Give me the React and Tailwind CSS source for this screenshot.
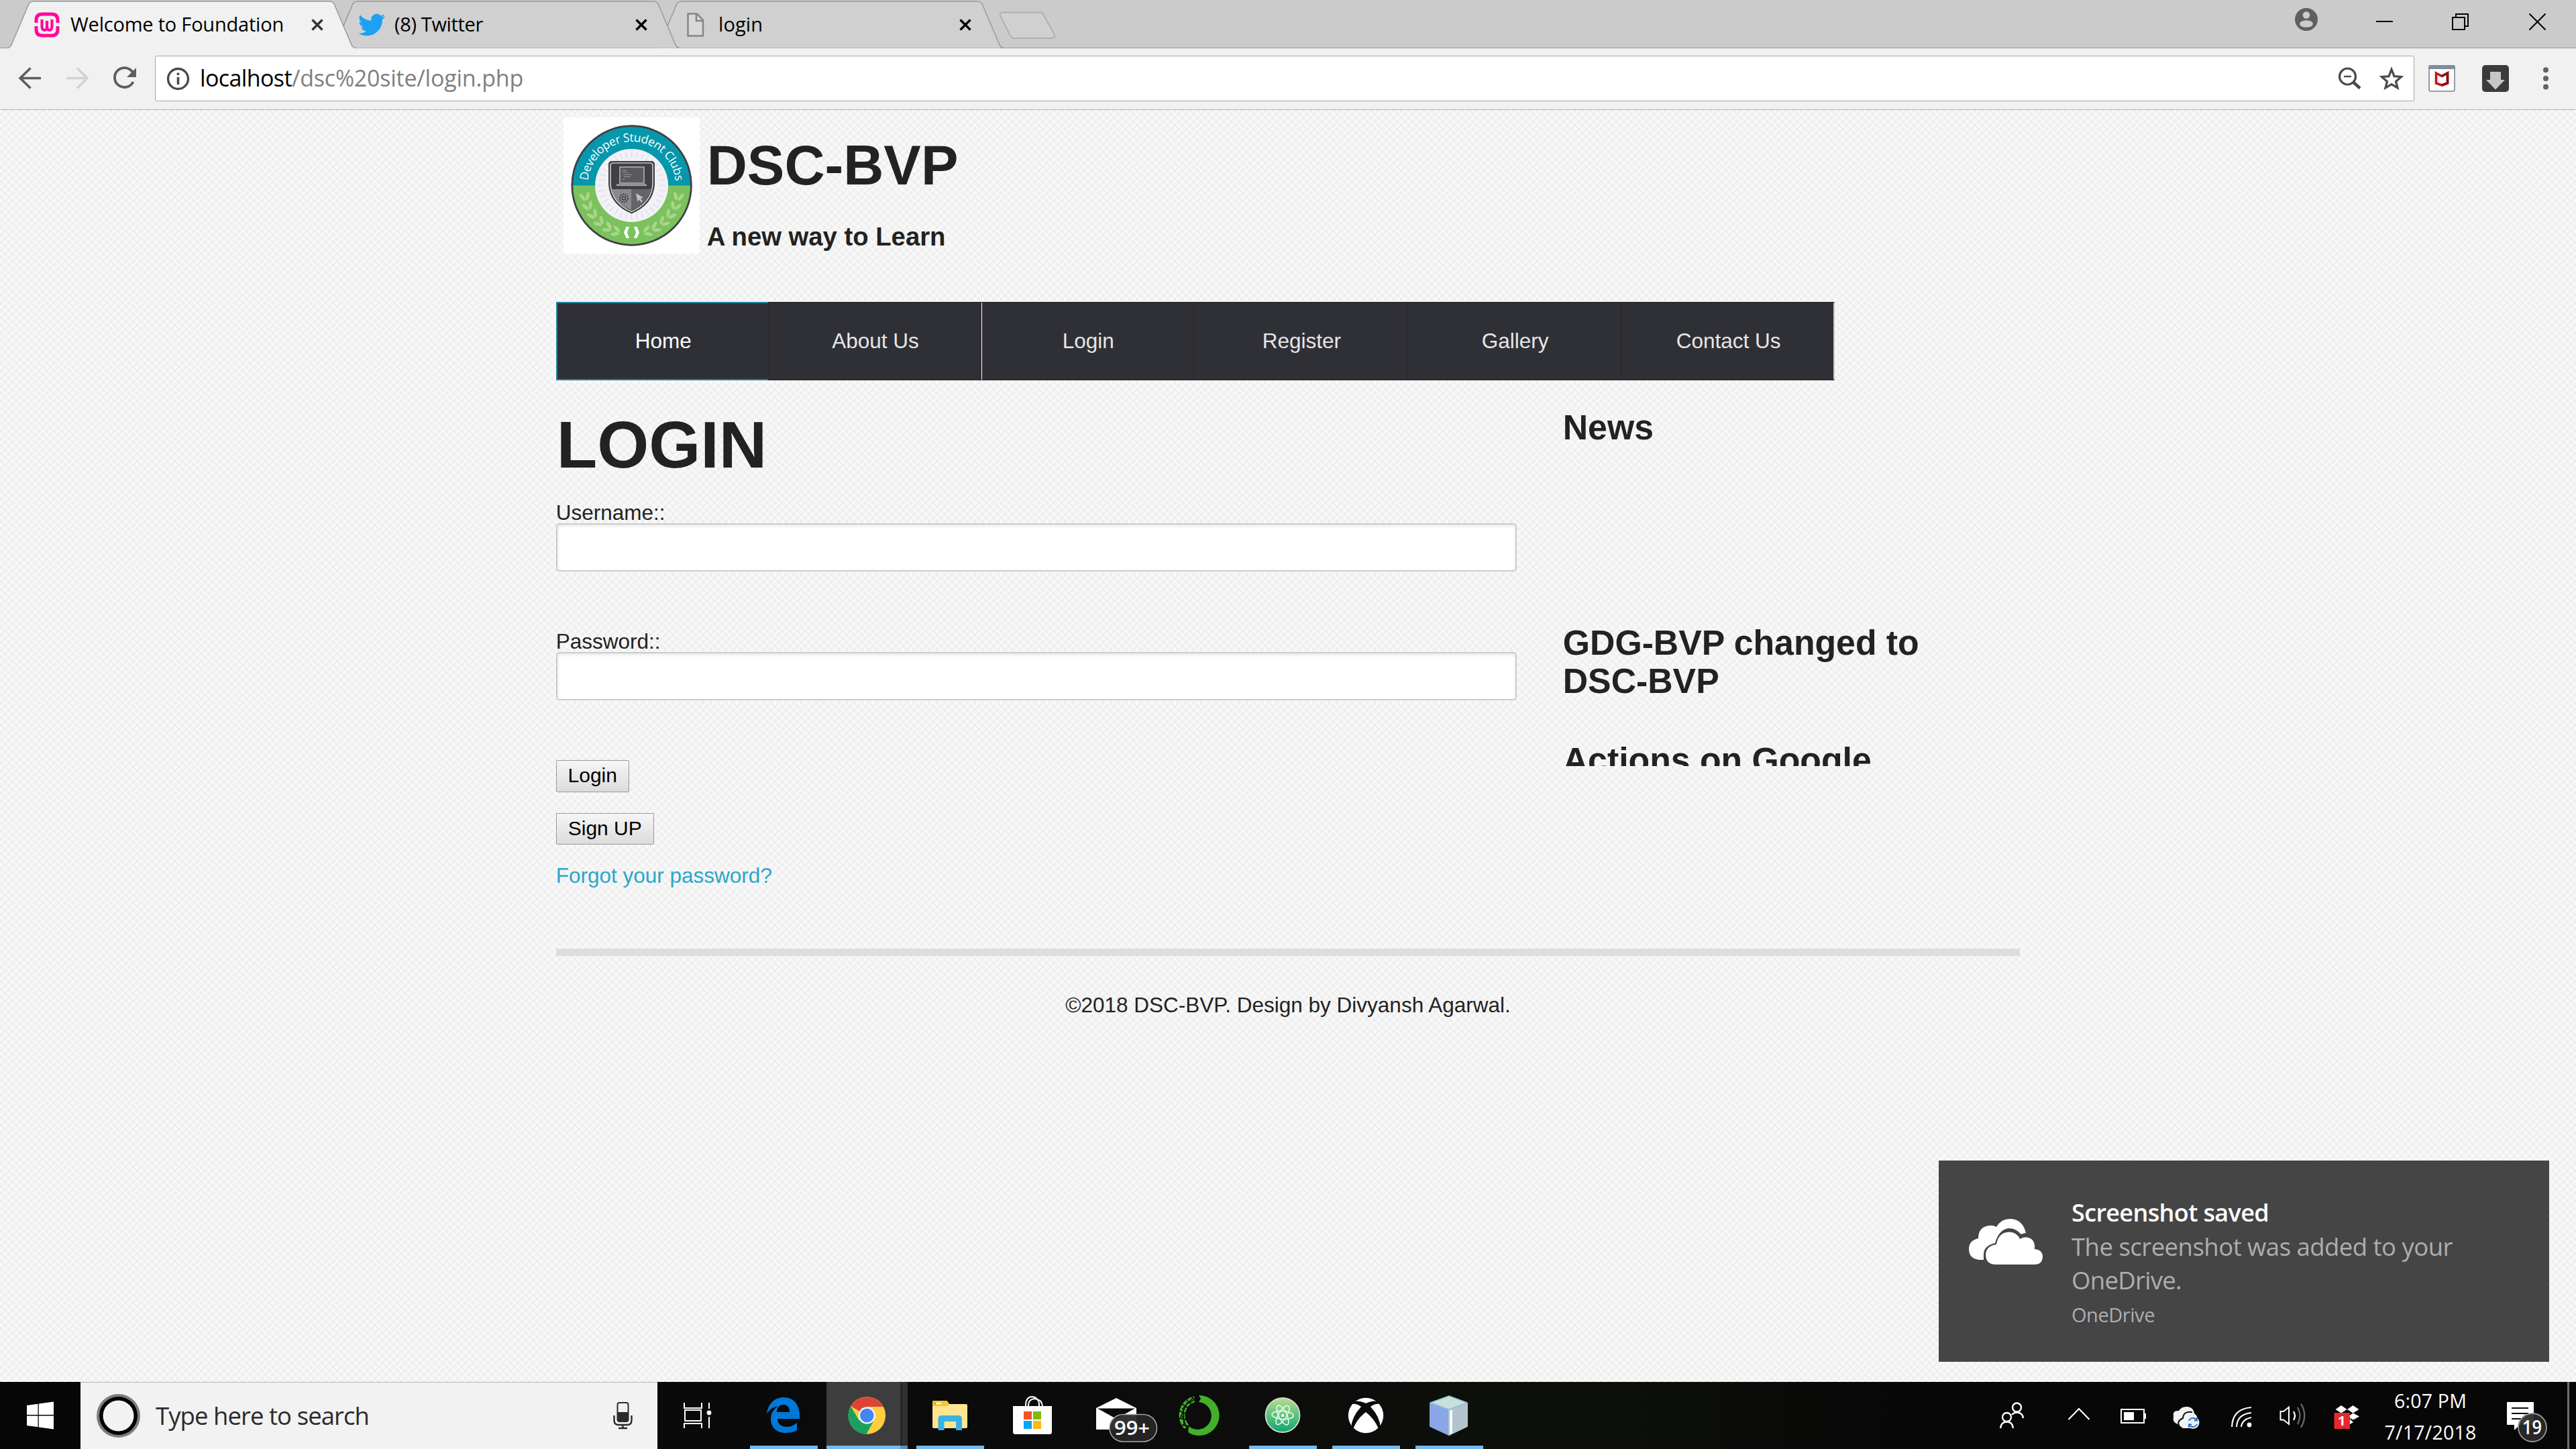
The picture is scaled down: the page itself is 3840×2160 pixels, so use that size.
import React, { useLayoutEffect, useRef } from "react";

const UI = "font-['Open_Sans','Noto_Sans',sans-serif]";
const ARIAL = "font-['Liberation_Sans',Arial,sans-serif]";

/* One line of text whose letter spacing is tuned so that it spans `w` pixels. */
function FitText({ w, className = "", children }) {
  const ref = useRef(null);
  useLayoutEffect(() => {
    const el = ref.current;
    el.style.letterSpacing = "0px";
    const natural = el.getBoundingClientRect().width;
    el.style.letterSpacing = `${(w - natural) / children.length}px`;
  }, [w, children]);
  return (
    <span ref={ref} className={`inline-block whitespace-nowrap ${className}`}>
      {children}
    </span>
  );
}

/* Icon cell drawn in window coordinates. */
function Cell({ x, y, w, h, children, className = "" }) {
  return (
    <svg width={w} height={h} viewBox={`${x} ${y} ${w} ${h}`} fill="none" className={`block shrink-0 ${className}`}>
      {children}
    </svg>
  );
}

/* ---------- browser chrome ---------- */

function WampIcon() {
  return (
    <svg width="38" height="38" viewBox="0 0 38 38" fill="none" stroke="#ff0a9c" strokeWidth="5">
      <path d="M3 16V12Q3 3 12 3H26Q35 3 35 12V16" />
      <path d="M3 21V26Q3 35 12 35H26Q35 35 35 26V21" />
      <path d="M11.500 11V20Q11.500 27 15 27Q19 27 19 21V13V21Q19 27 23 27Q26.500 27 26.500 20V11" strokeWidth="4.200" />
    </svg>
  );
}

function TwitterIcon() {
  return (
    <svg width="40" height="40" viewBox="0 0 24 24" fill="#1da1f2">
      <path d="M23.953 4.570a10 10 0 01-2.825.775 4.958 4.958 0 002.163-2.723c-.951.555-2.005.959-3.127 1.184a4.920 4.920 0 00-8.384 4.482C7.690 8.095 4.067 6.130 1.640 3.162a4.822 4.822 0 00-.666 2.475c0 1.710.870 3.213 2.188 4.096a4.904 4.904 0 01-2.228-.616v.060a4.923 4.923 0 003.946 4.827 4.996 4.996 0 01-2.212.085 4.936 4.936 0 004.604 3.417 9.867 9.867 0 01-6.102 2.105c-.390 0-.779-.023-1.170-.067a13.995 13.995 0 007.557 2.209c9.053 0 13.998-7.496 13.998-13.985 0-.210 0-.420-.015-.630A9.935 9.935 0 0024 4.590z" />
    </svg>
  );
}

function PageIcon() {
  return (
    <svg width="38" height="38" viewBox="0 0 38 38" fill="none" stroke="#858585" strokeWidth="2.500" className="ml-[6px]">
      <path d="M2.500 2.500H16L25 12V35.500H2.500Z" fill="#d9d9d9" />
      <path d="M15 3V13H25" />
    </svg>
  );
}

function Tab({ title, width, icon, active, className }) {
  return (
    <div className={`relative h-[72px] w-[519px] shrink-0 ${className}`}>
      <svg width="519" height="72" viewBox="0 0 519 72" className="absolute inset-0">
        <path
          d="M0 71.500Q5 71 7 64.500L31 8Q33 2 39 2H480Q486 2 488 8L512 64.500Q514 71 519 71.500"
          fill={active ? "#f1f1f1" : "#d0d0d0"}
          stroke="#999"
          strokeWidth="1.500"
        />
        {active && <rect x="3" y="70.500" width="513" height="2" fill="#f1f1f1" />}
      </svg>
      <div className="relative flex h-[72px] items-center pl-[40px] pr-[48px]">
        <div className="flex w-[54px] items-center pt-0.5">{icon}</div>
        <FitText w={width} className={`${UI} text-[29px] leading-[72px] text-black`}>{title}</FitText>
        <svg width="18" height="18" viewBox="0 0 18 18" className="ml-auto mt-0.5" stroke={active ? "#333" : "#000"} strokeWidth="3.400">
          <path d="M1.500 1.500L16.500 16.500M16.500 1.500L1.500 16.500" />
        </svg>
      </div>
    </div>
  );
}

function TabStrip() {
  return (
    <div className="flex h-[72px] bg-[#cbcbcb] bg-[linear-gradient(#999,#999)] bg-[length:100%_1px] bg-bottom bg-no-repeat pl-[11px]">
      <Tab active title="Welcome to Foundation" width={318} icon={<WampIcon />} className="z-30" />
      <Tab title="(8) Twitter" width={132} icon={<TwitterIcon />} className="z-20 -ml-[36px]" />
      <Tab title="login" width={66} icon={<PageIcon />} className="z-10 -ml-[36px]" />
      <Cell x={1480} y={0} w={100} h={70} className="-ml-[15px]">
        <path d="M1494 18.500H1549Q1553 18.500 1554.500 22L1571 52Q1572 57 1567 57H1511Q1507 57 1505 53L1490 23Q1489 18.500 1494 18.500Z" fill="#d0d0d0" stroke="#a6a6a6" strokeWidth="1.500" />
      </Cell>
      <div className="ml-auto flex">
        <Cell x={3400} y={0} w={100} h={70}>
          <circle cx="3438" cy="29" r="17" fill="#5f5f5f" />
          <circle cx="3438" cy="22.500" r="5.200" fill="#cbcbcb" />
          <ellipse cx="3438" cy="35.500" rx="10" ry="5.300" fill="#cbcbcb" />
        </Cell>
        <Cell x={3500} y={0} w={111} h={70}>
          <path d="M3542 32H3567" stroke="#000" strokeWidth="2" />
        </Cell>
        <Cell x={3611} y={0} w={114} h={70}>
          <path d="M3656 26H3674V44H3656ZM3661 25V21H3679V39H3675" stroke="#000" strokeWidth="2" />
        </Cell>
        <Cell x={3725} y={0} w={115} h={70}>
          <path d="M3770.500 20.500L3794.500 44.500M3794.500 20.500L3770.500 44.500" stroke="#000" strokeWidth="2" />
        </Cell>
      </div>
    </div>
  );
}

function Toolbar() {
  return (
    <div className="flex h-[92px] items-start border-b border-[#b6b6b6] bg-[#f1f1f1]">
      <Cell x={0} y={72} w={80} h={91}>
        <path d="M61 116.500H30M45.500 101.500L30 116.500L45.500 131.500" stroke="#5a5d62" strokeWidth="3.600" />
      </Cell>
      <Cell x={80} y={72} w={70} h={91}>
        <path d="M99 116.500H130M115 101.500L130 116.500L115 131.500" stroke="#d3d3d3" strokeWidth="3.600" />
      </Cell>
      <Cell x={150} y={72} w={81} h={91}>
        <path d="M197.500 107.500A14.500 14.500 0 1 0 198.500 122" stroke="#5a5d62" strokeWidth="3.800" />
        <path d="M203 101V115H189Z" fill="#5a5d62" />
      </Cell>
      <div className="mt-[11px] flex h-[68px] flex-1 rounded-[3px] border border-[#a6a6a6] bg-white">
        <Cell x={232} y={84} w={66} h={66}>
          <circle cx="265.500" cy="117.500" r="15" stroke="#4a4a4a" strokeWidth="3.400" />
          <path d="M265.500 115V126M265.500 108.500V112" stroke="#4a4a4a" strokeWidth="3.600" />
        </Cell>
        <div className={`${UI} text-[34px] leading-[65px] whitespace-nowrap`}>
          <FitText w={137} className="text-black">localhost</FitText>
          <FitText w={345} className="text-[#808080]">/dsc%20site/login.php</FitText>
        </div>
        <div className="ml-auto flex">
          <Cell x={3470} y={84} w={60} h={66}>
            <circle cx="3499.500" cy="114" r="12" stroke="#4a4a4a" strokeWidth="3.200" />
            <path d="M3494 114H3505" stroke="#4a4a4a" strokeWidth="2.400" />
            <path d="M3508.500 123L3518 131.500" stroke="#4a4a4a" strokeWidth="4.600" />
          </Cell>
          <Cell x={3530} y={84} w={68} h={66}>
            <path d="M3565 103.500L3569 113.700L3579.500 114.500L3571.500 121.500L3574 131L3565 125.700L3556 131L3558.500 121.500L3550.500 114.500L3561 113.700Z" stroke="#4a4a4a" strokeWidth="3.200" />
          </Cell>
        </div>
      </div>
      <Cell x={3599} y={72} w={81} h={91}>
        <rect x="3621" y="98" width="38" height="38" rx="3" fill="#fff" stroke="#999ba5" strokeWidth="2" />
        <path d="M3620 103V100Q3620 97 3623 97H3657Q3660 97 3660 100V103Z" fill="#78909c" />
        <path d="M3631.500 109L3640 113.500L3648.500 109V124L3640 127L3631.500 124Z" stroke="#c01818" strokeWidth="3.600" />
        <path d="M3640 113.500L3648.500 109V124L3640 127" stroke="#8a1015" strokeWidth="3.600" />
      </Cell>
      <Cell x={3680} y={72} w={80} h={91}>
        <rect x="3700" y="97" width="40" height="40" rx="5" fill="#3b3b3b" />
        <path d="M3712 107H3728V119H3734L3720 133.500L3706 119H3712Z" fill="#c6c6c6" />
      </Cell>
      <Cell x={3760} y={72} w={80} h={91}>
        <g fill="#5f6368">
          <circle cx="3795" cy="104.300" r="4" />
          <circle cx="3795" cy="117" r="4" />
          <circle cx="3795" cy="129.500" r="4" />
        </g>
      </Cell>
    </div>
  );
}

/* ---------- web page ---------- */

function ClubBadge() {
  const side = [10, 22, 34, 46, 58, 69].map((deg) => {
    const a = ((180 - deg) * Math.PI) / 180;
    return { x: 101.600 + 71 * Math.cos(a), y: 104 + 70 * Math.sin(a), deg };
  });
  const wreath = side.map(({ x, y, deg }) => (
    <g key={deg} transform={`translate(${x} ${y}) rotate(${-deg})`} fill="#a9d68a">
      <ellipse cx="-4.500" cy="0" rx="2.600" ry="6.500" transform="rotate(-28)" />
      <ellipse cx="4.500" cy="0" rx="2.600" ry="6.500" transform="rotate(28)" />
    </g>
  ));
  const rays = Array.from({ length: 36 }, (_, i) => i * 10);
  return (
    <svg width="203" height="203" viewBox="0 0 203 203" className="block shrink-0 bg-white">
      <circle cx="101.600" cy="101.500" r="88.500" fill="#7bc15e" />
      <path d="M13.100 101.500A88.500 88.500 0 0 1 190.100 101.500Z" fill="#0797ac" />
      <circle cx="101.600" cy="101.500" r="88.800" fill="none" stroke="#414042" strokeWidth="2.800" />
      <circle cx="101.600" cy="101.500" r="54.500" fill="#f2f1f6" />
      <g stroke="#dcdbe2" strokeWidth="1.300">
        {rays.map((r) => (
          <path key={r} d="M101.600 60V51" transform={`rotate(${r} 101.600 101.500)`} />
        ))}
      </g>
      {wreath}
      <g transform="translate(203.200 0) scale(-1 1)">{wreath}</g>
      <path d="M98 163H93.500L90 171.500L93.500 180H98L95 171.500ZM105 163H109.500L113 171.500L109.500 180H105L108 171.500Z" fill="#fff" />
      <path d="M67 70Q67 65 73 65H130Q136 65 136 70V100Q134 130 101.500 143.500Q69 130 67 100Z" fill="#414042" />
      <path d="M70 72Q70 68 74 68H129Q133 68 133 72V100Q131 127.500 101.500 140.500Q72 127.500 70 100Z" fill="#414042" stroke="#fff" strokeWidth="1.200" />
      <path d="M71.500 107H101.500V138.500Q76 128 71.500 107Z" fill="#8a898c" />
      <path d="M131.500 107H101.500V138.500Q127 128 131.500 107Z" fill="#656467" />
      <rect x="84" y="74" width="36" height="24" fill="#5a595c" stroke="#a7a6aa" strokeWidth="1.800" />
      <rect x="79" y="99.500" width="45" height="2.600" fill="#a7a6aa" />
      <path d="M88 79H94M88 82H96M89 85.500H102M90 88.500H100M88 92.500H91" stroke="#98979b" strokeWidth="1.200" />
      <circle cx="90" cy="120.500" r="6" fill="none" stroke="#414042" strokeWidth="2" strokeDasharray="2.400 1.200" />
      <circle cx="90" cy="120.500" r="3.200" fill="#414042" />
      <circle cx="90" cy="120.500" r="1.200" fill="#c8c7ca" />
      <path d="M108 113L110.500 125.500L113 122.500L116 127L118 125L115 121L119 119.500Z" fill="#c0bfc3" />
      <path id="clubArc" d="M36.600 112A65.800 65.800 0 1 1 166.600 112" fill="none" />
      <text fill="#fff" fontSize="17.500" letterSpacing="-0.450" textAnchor="middle" className={UI}>
        <textPath href="#clubArc" startOffset="50%">Developer Student Clubs</textPath>
      </text>
    </svg>
  );
}

const NAV = ["Home", "About Us", "Login", "Register", "Gallery", "Contact Us"];

const NAV_TONES = [
  "border-y-2 border-l-2 border-[#2284a1] text-white",
  "border-2 border-[#2d2d30] text-[#e6e6e6]",
  "border-2 border-[#2d2d30] border-l border-l-white text-[#e6e6e6]",
  "border-2 border-[#2d2d30] text-[#e6e6e6]",
  "border-2 border-[#2d2d30] text-[#e6e6e6]",
  "border-2 border-[#2d2d30] border-r-[#c8c8c8] text-[#e6e6e6]",
];

function Nav() {
  return (
    <nav className="flex h-[117px] w-[1906px]">
      {NAV.map((label, i) => (
        <a
          key={label}
          className={`flex flex-1 items-center justify-center bg-[#2f3036] pb-[2px] pl-[2px] text-[31.5px] leading-[40px] ${NAV_TONES[i]}`}
        >
          {label}
        </a>
      ))}
    </nav>
  );
}

function Field({ label, type, className }) {
  return (
    <div className={className}>
      <label className="block text-[31.5px] leading-[32px]">{label}</label>
      <input type={type} className="block h-[72px] w-full rounded-[5px] border-2 border-[#ccc] bg-white shadow-[inset_0_2px_5px_rgba(0,0,0,0.1)]" />
    </div>
  );
}

function FormButton({ children, className }) {
  return (
    <button className={`block rounded-[2px] border border-[#999] bg-gradient-to-b from-[#f6f6f6] to-[#dcdcdc] pb-[2px] text-[30px] leading-[40px] text-black ${className}`}>
      {children}
    </button>
  );
}

function Page() {
  return (
    <div
      className={`${ARIAL} h-[1896px] overflow-hidden bg-[#f9f9f9] bg-[repeating-linear-gradient(45deg,rgba(0,0,0,0.022)_0_2.5px,transparent_3.5px_7px,rgba(0,0,0,0.022)_7.955px),repeating-linear-gradient(-45deg,rgba(0,0,0,0.022)_0_2.5px,transparent_3.5px_7px,rgba(0,0,0,0.022)_7.955px)] text-[#222]`}
    >
      <div className="mx-auto w-[2182.5px]">
        <header className="flex h-[286px] pl-[11px] pt-[11px]">
          <ClubBadge />
          <div className="ml-[11px] mt-[26px] font-bold">
            <h1 className="text-[83.25px] leading-[92px]">DSC-BVP</h1>
            <p className="mt-[33px] text-[38.25px] leading-[54px]">A new way to Learn</p>
          </div>
        </header>
        <Nav />
        <main className="flex items-start pt-[41px]">
          <form className="w-[1432px]">
            <h1 className="pl-px text-[99px] font-bold leading-[110px]">LOGIN</h1>
            <Field label="Username::" type="text" className="mt-[30px]" />
            <Field label="Password::" type="password" className="mt-[88px]" />
            <FormButton className="mt-[89px] h-[48px] w-[109px]">Login</FormButton>
            <FormButton className="mt-[31px] h-[47px] w-[146px]">Sign UP</FormButton>
            <a className="mt-[26px] block text-[31.5px] leading-[40px] text-[#2ba6cb]">Forgot your password?</a>
          </form>
          <aside className="ml-[69px] mt-px w-[620px] text-[51.75px] font-bold leading-[56.5px]">
            <h3 className="h-[57px]">News</h3>
            <div className="h-[476px] overflow-hidden pt-[264px]">
              <h3>
                GDG-BVP changed to
                <br />
                DSC-BVP
              </h3>
              <h3 className="mt-[62px]">Actions on Google</h3>
            </div>
          </aside>
        </main>
        <div className="mt-[89px] h-[11px] bg-[#ddd]" />
        <footer className="mt-[53px] text-center text-[31.5px] leading-[40px]">©2018 DSC-BVP. Design by Divyansh Agarwal.</footer>
      </div>
    </div>
  );
}

/* ---------- notification ---------- */

function Toast() {
  return (
    <div className={`${UI} absolute left-[2890px] top-[1730px] flex h-[300px] w-[910px] bg-[#454545]`}>
      <Cell x={2890} y={1730} w={198} h={300}>
        <path d="M2957 1878H2950Q2935 1876 2935 1862Q2935 1849 2949 1846Q2949 1829 2965 1827Q2971 1826 2976 1829Q2983 1817 2996 1817Q3015 1817 3020 1838Q3017 1838 3013 1840Q3005 1831 2995 1831Q2980 1832 2974 1853Q2957 1857 2957 1870Z" fill="#fff" />
        <path d="M2974 1885Q2960 1884 2960 1870Q2961 1857 2976 1855Q2979 1837 2995 1836.500Q3007 1837 3011 1847Q3017 1843 3024 1845Q3034 1848 3033 1862Q3045 1863 3045 1874Q3044 1885 3034 1885Z" fill="#fff" />
      </Cell>
      <div className="flex flex-col items-start pt-[53px] text-[#aeaeae]">
        <FitText w={294} className="text-[36px] font-semibold leading-[50px] text-white">Screenshot saved</FitText>
        <FitText w={568} className="text-[36.5px] leading-[50px]">The screenshot was added to your</FitText>
        <FitText w={164} className="text-[36.5px] leading-[50px]">OneDrive.</FitText>
        <FitText w={124} className="mt-[7px] text-[29px] leading-[40px]">OneDrive</FitText>
      </div>
    </div>
  );
}

/* ---------- taskbar ---------- */

function TaskCell({ x, w = 124, running, children }) {
  return (
    <Cell x={x} y={2060} w={w} h={100}>
      {children}
      {running && <rect x={x + 12} y="2155" width="101" height="5" fill="#76b9ed" />}
    </Cell>
  );
}

function TaskButtons() {
  return (
    <>
      <TaskCell x={980} w={126}>
        <g stroke="#fff" strokeWidth="2">
          <path d="M1020 2091V2099H1046V2091M1021 2102H1045V2118H1021ZM1020 2129V2122H1046V2129M1057 2091V2100M1057 2112V2129" />
        </g>
        <circle cx="1057" cy="2106" r="3.400" fill="#fff" />
      </TaskCell>
      <TaskCell x={1106} running>
        <path d="M1143 2108C1145 2092 1155 2083 1168 2083C1183 2083 1192 2094 1192 2110V2115H1159C1159 2123 1165 2127 1173 2127C1180 2127 1184 2124 1188 2121V2132C1183 2135 1177 2136 1171 2136C1157 2136 1149 2127 1149 2115C1149 2106 1154 2100 1160 2096C1151 2098 1146 2102 1143 2108ZM1158 2105H1177C1177 2098 1174 2094 1168 2094C1161 2094 1158 2099 1158 2105Z" fill="#0078d7" fillRule="evenodd" />
      </TaskCell>
      <TaskCell x={1230}>
        <rect x="1232" y="2060" width="110" height="100" fill="#3d3d3d" />
        <rect x="1342" y="2060" width="3" height="100" fill="#262626" />
        <rect x="1345" y="2060" width="8" height="100" fill="#303030" />
        <rect x="1232" y="2155" width="110" height="5" fill="#76b9ed" />
        <rect x="1342" y="2155" width="11" height="5" fill="#5b90bb" />
        <circle cx="1292.300" cy="2110" r="27.800" fill="#ffcd40" />
        <path d="M1292.300 2110L1268.200 2096.100A27.800 27.800 0 0 1 1316.500 2097H1292.300Z" fill="#db4437" />
        <path d="M1268.200 2096.100L1280.500 2117L1302 2119L1291.500 2137.800A27.800 27.800 0 0 1 1268.200 2096.100Z" fill="#1aa15f" />
        <circle cx="1292.300" cy="2110" r="12.800" fill="#f1f1f1" />
        <circle cx="1292.300" cy="2110" r="10.300" fill="#4285f4" />
      </TaskCell>
      <TaskCell x={1354} running>
        <path d="M1390 2090Q1390 2088 1392 2088H1410Q1412 2088 1413 2090L1415 2093H1440Q1442 2093 1442 2095V2127Q1442 2129 1440 2129H1392Q1390 2129 1390 2127Z" fill="#ffe590" />
        <path d="M1390 2096V2090Q1390 2088 1392 2088H1410Q1412 2088 1413 2090L1415 2093L1412 2096Z" fill="#f9c629" />
        <path d="M1395 2092H1403" stroke="#fff" strokeWidth="2.400" />
        <path d="M1393 2092H1395" stroke="#38b0e5" strokeWidth="2.400" />
        <path d="M1398.500 2132V2115Q1398.500 2110 1403.500 2110H1429Q1434 2110 1434 2115V2132H1425V2119H1407.500V2132Z" fill="#3bb2e6" />
      </TaskCell>
      <TaskCell x={1478}>
        <path d="M1510 2096H1568V2134.500Q1568 2138 1564.500 2138H1513.500Q1510 2138 1510 2134.500Z" fill="#fff" />
        <path d="M1529 2096V2093Q1530 2082 1539 2082Q1547 2083 1549 2092V2096M1533 2096V2093Q1534 2086 1542 2085Q1553 2086 1554 2096" stroke="#fff" strokeWidth="2" />
        <rect x="1526" y="2104" width="12" height="12" fill="#f35325" />
        <rect x="1540" y="2104" width="12" height="12" fill="#81bc06" />
        <rect x="1526" y="2118" width="12" height="12" fill="#05a6f0" />
        <rect x="1540" y="2118" width="12" height="12" fill="#ffba08" />
      </TaskCell>
      <TaskCell x={1602}>
        <path d="M1634 2099L1664 2084L1694 2099V2131H1634Z" fill="#fff" />
        <path d="M1636 2099.500H1692L1664 2115Z" fill="#0a0a0a" />
        <rect x="1654" y="2108.500" width="70.500" height="40.500" rx="20" fill="#262626" fillOpacity="0.940" stroke="#a8a8a8" strokeWidth="1.500" />
        <text x="1661" y="2139" fill="#fff" fontSize="29" fontWeight="600" textLength="53" lengthAdjust="spacingAndGlyphs" className={UI}>99+</text>
      </TaskCell>
      <TaskCell x={1726}>
        <path d="M1787 2080A30 30 0 1 1 1771 2135L1772 2126A20.500 20.500 0 1 0 1787 2090L1790 2085Z" fill="#43b02a" />
        <path d="M1781 2085.500A25 25 0 0 0 1769 2127" stroke="#43b02a" strokeWidth="9" />
        <path d="M1776 2081L1784 2092M1768 2086L1778 2095M1762 2093L1773 2100M1758 2103L1769 2108M1758 2114L1770 2117M1762 2124L1774 2126M1786 2083L1771 2092M1779 2083L1762 2101M1770 2090L1759 2115M1764 2100L1765 2126M1762 2110L1771 2134" stroke="#0a0a0a" strokeWidth="1.500" />
      </TaskCell>
      <TaskCell x={1850} running>
        <defs>
          <linearGradient id="atomGreen" x1="0" y1="0" x2="0" y2="1">
            <stop offset="0" stopColor="#b4df8e" />
            <stop offset="1" stopColor="#0aa66f" />
          </linearGradient>
        </defs>
        <circle cx="1912" cy="2109.500" r="25.500" fill="url(#atomGreen)" stroke="#d6d9d4" strokeWidth="1.800" />
        <g stroke="#eefaf0" strokeWidth="1.600">
          <ellipse cx="1912" cy="2109.500" rx="16" ry="6" transform="rotate(4 1912 2109.500)" />
          <ellipse cx="1912" cy="2109.500" rx="16" ry="6" transform="rotate(64 1912 2109.500)" />
          <ellipse cx="1912" cy="2109.500" rx="16" ry="6" transform="rotate(122 1912 2109.500)" />
        </g>
        <circle cx="1912" cy="2110" r="2.200" fill="#fff" />
      </TaskCell>
      <TaskCell x={1974} running>
        <circle cx="2036" cy="2110" r="26.200" fill="#fff" />
        <path d="M2018 2089Q2026 2087 2036 2092Q2046 2087 2054 2089L2056 2093Q2050 2092 2043 2097Q2057 2112 2058 2128L2055 2130Q2049 2115 2036 2105Q2023 2115 2017 2130L2014 2128Q2015 2112 2029 2097Q2022 2092 2016 2093Z" fill="#0c0d0a" />
      </TaskCell>
      <TaskCell x={2098} running>
        <path d="M2132 2092L2160 2101L2160 2139L2132 2126Z" fill="#8aa6e6" stroke="#8aa6e6" strokeLinejoin="round" strokeWidth="2" />
        <path d="M2187 2092L2160 2101L2160 2139L2187 2126Z" fill="#b3c3cc" stroke="#b3c3cc" strokeLinejoin="round" strokeWidth="2" />
        <path d="M2160 2081L2187 2091L2160 2101L2132 2091Z" fill="#c8e0da" stroke="#8dbfd8" strokeLinejoin="round" strokeWidth="1.500" />
        <path d="M2161 2103L2165 2101V2136L2161 2138Z" fill="#f4faff" />
      </TaskCell>
    </>
  );
}

function Tray() {
  return (
    <div className="ml-auto flex">
      <Cell x={2960} y={2060} w={80} h={100}>
        <g stroke="#fff" strokeWidth="2.400">
          <circle cx="3006.500" cy="2098" r="6.500" />
          <path d="M2999 2109Q3002 2105.500 3007 2105.500Q3015 2106 3016 2114" />
          <circle cx="2991.500" cy="2112.500" r="6.500" />
          <path d="M2982 2129Q2983 2119.500 2991.500 2119.500Q3000 2119.500 3001 2129" />
        </g>
      </Cell>
      <Cell x={3040} y={2060} w={100} h={100}>
        <path d="M3083.500 2116L3099 2100L3114.500 2116" stroke="#fff" strokeWidth="2.200" />
      </Cell>
      <Cell x={3140} y={2060} w={80} h={100}>
        <rect x="3162" y="2101" width="34" height="20" stroke="#fff" strokeWidth="2" />
        <rect x="3166" y="2105" width="15" height="12" fill="#fff" />
        <rect x="3196" y="2107" width="3" height="8" fill="#fff" />
      </Cell>
      <Cell x={3220} y={2060} w={80} h={100}>
        <path d="M3246 2123Q3238 2120 3240 2112Q3238 2102 3248 2103Q3252 2096 3261 2097Q3270 2098 3271 2107Q3278 2112 3276 2122L3268 2129H3254Z" fill="#f2f2f2" />
        <path d="M3250 2128Q3243 2119 3254 2114Q3255 2103 3268 2105" stroke="#0a0a0a" strokeWidth="2" />
        <circle cx="3269" cy="2120.500" r="9.500" fill="#e8eef7" />
        <path d="M3263 2118Q3265 2113.500 3270 2114Q3273 2114.500 3275 2117M3275 2123Q3273 2127.500 3268 2127Q3265 2126.500 3263 2124M3275 2113V2117.500H3271M3263 2128V2123.500H3267" stroke="#2a6ac4" strokeWidth="1.800" />
      </Cell>
      <Cell x={3300} y={2060} w={80} h={100}>
        <g stroke="#fff" strokeWidth="2.200">
          <path d="M3327 2127Q3328 2100 3356 2098M3334 2127Q3335 2108 3356 2106M3341 2127Q3342 2116 3356 2113" />
        </g>
        <circle cx="3353" cy="2124" r="3.400" fill="#fff" />
      </Cell>
      <Cell x={3380} y={2060} w={80} h={100}>
        <path d="M3399.500 2104H3404L3412 2097.500V2123L3404 2116.500H3399.500Z" stroke="#fff" strokeWidth="2" />
        <path d="M3419 2104Q3423 2110.500 3419 2117" stroke="#fff" strokeWidth="2.200" />
        <path d="M3425 2098Q3432 2110 3425 2123M3430 2092.500Q3440.500 2110 3430 2128" stroke="#6a6a6a" strokeWidth="2.200" />
      </Cell>
      <Cell x={3460} y={2060} w={80} h={100}>
        <path d="M3490 2095L3498.500 2101L3490 2106.500L3481.500 2101ZM3507.500 2095L3516.500 2101L3507.500 2106.500L3499 2101ZM3508 2116.500L3517 2111.500L3508 2106.500L3499 2112ZM3490 2117L3499 2112L3508 2120L3498.500 2126Z" fill="#fff" />
        <rect x="3479.500" y="2106" width="23.500" height="24" fill="#e6282d" />
        <text x="3485" y="2125" fill="#fff" fontSize="20" fontWeight="700" className={UI}>1</text>
      </Cell>
      <div className={`${UI} flex h-[100px] w-[166px] flex-col items-center text-[28.5px] leading-[46px] text-white`}>
        <FitText w={108} className="mt-[5px]">6:07 PM</FitText>
        <FitText w={137} className="mt-px">7/17/2018</FitText>
      </div>
      <Cell x={3706} y={2060} w={134} h={100}>
        <path d="M3737 2090H3777V2124H3756L3748 2132V2124H3737Z" fill="#fff" />
        <path d="M3744 2099H3769M3744 2107H3769M3744 2115H3760" stroke="#0a0a0a" strokeWidth="2.200" />
        <circle cx="3775" cy="2128" r="21" fill="#2a2a2a" fillOpacity="0.930" stroke="#9a9a9a" strokeWidth="1.800" />
        <text x="3760" y="2138" fill="#fff" fontSize="28" fontWeight="600" textLength="29" lengthAdjust="spacingAndGlyphs" className={UI}>19</text>
        <rect x="3827" y="2060" width="3" height="100" fill="#6e6e6e" />
      </Cell>
    </div>
  );
}

function Taskbar() {
  return (
    <div className="flex h-[100px] bg-[linear-gradient(90deg,#060606,#0c0c0c_45%,#0d100a_62%,#070707_75%)]">
      <Cell x={0} y={2060} w={120} h={100}>
        <path d="M40 2095L56.500 2092.700V2109H40ZM57.800 2092.500L80 2089.500V2109H57.800ZM40 2110.500H56.500V2127.300L40 2125ZM57.800 2110.500H80V2130.500L57.800 2127.500Z" fill="#fff" />
      </Cell>
      <div className="flex w-[860px] border-t border-[#b6b6b6] bg-[#f2f2f2]">
        <Cell x={120} y={2061} w={112} h={99}>
          <circle cx="176.500" cy="2110.500" r="32.500" fill="#7d7d7d" />
          <circle cx="176.500" cy="2110.500" r="28.500" fill="#000" />
          <circle cx="176.500" cy="2110.500" r="23" fill="#f2f2f2" />
        </Cell>
        <FitText w={318} className={`${UI} text-[36.5px] leading-[99px] text-[#2b2b2b]`}>Type here to search</FitText>
        <Cell x={890} y={2061} w={90} h={99} className="ml-auto">
          <rect x="920.500" y="2091" width="16" height="28" rx="3" stroke="#2b2b2b" strokeWidth="2" />
          <path d="M920.500 2105H936.500V2116Q936.500 2119 933.500 2119H923.500Q920.500 2119 920.500 2116Z" fill="#2b2b2b" />
          <path d="M915.500 2110V2117Q915.500 2124 922 2124H935Q941.500 2124 941.500 2117V2110M928.500 2124V2130M922 2129H935" stroke="#2b2b2b" strokeWidth="2.400" />
        </Cell>
      </div>
      <TaskButtons />
      <Tray />
    </div>
  );
}

export default function App() {
  return (
    <div className="relative h-[2160px] w-[3840px] overflow-hidden">
      <TabStrip />
      <Toolbar />
      <Page />
      <Taskbar />
      <Toast />
    </div>
  );
}
